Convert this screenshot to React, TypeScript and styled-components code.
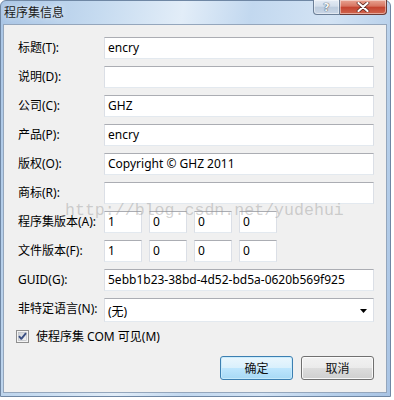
import React from "react";
import styled, { createGlobalStyle } from "styled-components";

const Global = createGlobalStyle`
  html, body { margin: 0; padding: 0; background: #ffffff; }
  body { font-family: "Noto Sans", "Noto Sans CJK SC", sans-serif; font-size: 12px; color: #000; }
  * { box-sizing: border-box; }
`;

const Window = styled.div`
  width: 391px;
  height: 397px;
  display: flex;
  flex-direction: column;
  border: 1px solid #6f87a4;
  border-radius: 6px 6px 0 0;
  padding: 0 3px 3px 2px;
  background: linear-gradient(
    100deg,
    #a9c5e5 0%,
    #c6dbf0 22%,
    #e2edf8 40%,
    #c2d8ef 55%,
    #d3e3f4 72%,
    #b6cfea 88%,
    #a9c4e4 100%
  );
`;

const TitleBar = styled.div`
  height: 23px;
  display: flex;
  justify-content: space-between;
  align-items: flex-start;
`;

const TitleText = styled.div`
  padding: 3px 0 0 1px;
  font-family: "Noto Sans CJK SC", sans-serif;
  font-size: 12px;
  line-height: 16px;
  color: #1b1b1b;
  text-shadow: 0 0 6px rgba(255, 255, 255, 0.9);
`;

const CaptionButtons = styled.div`
  display: flex;
  margin-top: -1px;
`;

const CaptionButton = styled.div<{ $kind: "help" | "close" }>`
  height: 15px;
  width: ${(p) => (p.$kind === "help" ? "27px" : "47px")};
  display: flex;
  align-items: center;
  justify-content: center;
  border: 1px solid ${(p) => (p.$kind === "help" ? "#6c7f97" : "#6b3b36")};
  border-top: none;
  border-radius: ${(p) => (p.$kind === "help" ? "0 0 0 4px" : "0 0 4px 0")};
  border-left: ${(p) => (p.$kind === "close" ? "none" : "")};
  box-shadow: inset 0 0 0 1px rgba(255, 255, 255, 0.45);
  background: ${(p) =>
    p.$kind === "help"
      ? "linear-gradient(#e4ebf4 0%, #d3deeb 45%, #bccbdd 50%, #c9d6e6 100%)"
      : "linear-gradient(#e8a493 0%, #d7735f 45%, #c4422e 50%, #d0664f 100%)"};
`;

const HelpGlyph = styled.span`
  font-family: "DejaVu Sans", sans-serif;
  font-weight: bold;
  font-size: 11px;
  line-height: 11px;
  color: #f4f6f9;
  text-shadow: 0 0 1px #3d4a5c, 0 0 1px #3d4a5c;
`;

const Client = styled.div`
  position: relative;
  flex: 1;
  background: #f0f0f0;
  border: 1px solid #94a6bc;
  display: flex;
  flex-direction: column;
  padding: 12px 12px 0 14px;
`;

const FormGrid = styled.div`
  display: grid;
  grid-template-columns: 86px 1fr;
  grid-auto-rows: 22px;
  row-gap: 7px;
  align-items: center;
`;

const Label = styled.div`
  font-size: 12px;
  line-height: 16px;
  color: #000;
  white-space: nowrap;
`;

const boxBorder = `
  border-top: 1px solid #abadb3;
  border-left: 1px solid #dbdfe6;
  border-right: 1px solid #dbdfe6;
  border-bottom: 1px solid #e3e9ef;
`;

const TextBox = styled.div<{ $w?: number }>`
  height: 22px;
  width: ${(p) => (p.$w ? `${p.$w}px` : "100%")};
  background: #ffffff;
  ${boxBorder}
  padding: 0 4px 0 3px;
  display: flex;
  align-items: center;
  font-size: 12px;
  line-height: 16px;
  white-space: nowrap;
  overflow: hidden;
`;

const VersionRow = styled.div`
  display: flex;
  gap: 7px;
`;

const Combo = styled.div`
  height: 24px;
  align-self: start;
  background: #ffffff;
  ${boxBorder}
  padding: 1px 6px 0 3px;
  display: flex;
  align-items: center;
  justify-content: space-between;
  font-size: 12px;
`;

const CheckRow = styled.div`
  display: flex;
  align-items: center;
  gap: 7px;
  margin: 9px 0 0 -2px;
  height: 14px;
  font-size: 12px;
`;

const ButtonRow = styled.div`
  display: flex;
  justify-content: flex-end;
  gap: 8px;
  margin-top: 13px;
`;

const PushButton = styled.div<{ $default?: boolean }>`
  width: 73px;
  height: 24px;
  display: flex;
  align-items: center;
  justify-content: center;
  border-radius: 3px;
  font-size: 12px;
  color: #111;
  border: 1px solid ${(p) => (p.$default ? "#3c7fb1" : "#707070")};
  box-shadow: inset 0 0 0 1px
    ${(p) => (p.$default ? "rgba(200, 235, 252, 0.9)" : "rgba(252, 252, 252, 0.9)")};
  background: ${(p) =>
    p.$default
      ? "linear-gradient(#eaf6fd 0%, #d9f0fc 49%, #bee6fd 50%, #a7d9f5 100%)"
      : "linear-gradient(#f2f2f2 0%, #ebebeb 49%, #dddddd 50%, #cfcfcf 100%)"};
`;

const Watermark = styled.div`
  position: absolute;
  left: 61px;
  top: 176px;
  font-family: "Liberation Mono", monospace;
  font-size: 16.6px;
  line-height: 20px;
  color: rgba(150, 150, 150, 0.42);
  white-space: nowrap;
  pointer-events: none;
`;

const CloseIcon = () => (
  <svg width="14" height="10" viewBox="0 0 14 10">
    <path
      d="M2.5 1 L11.5 9 M11.5 1 L2.5 9"
      stroke="#5a2620"
      strokeWidth="3.6"
      strokeLinecap="round"
    />
    <path
      d="M2.5 1 L11.5 9 M11.5 1 L2.5 9"
      stroke="#ffffff"
      strokeWidth="2.2"
      strokeLinecap="round"
    />
  </svg>
);

const DropArrow = () => (
  <svg width="7" height="4" viewBox="0 0 7 4">
    <path d="M0 0 H7 L3.5 4 Z" fill="#000" />
  </svg>
);

const CheckBoxIcon = () => (
  <svg width="13" height="13" viewBox="0 0 13 13">
    <defs>
      <linearGradient id="cbg" x1="0" y1="0" x2="1" y2="1">
        <stop offset="0" stopColor="#cbcfd5" />
        <stop offset="1" stopColor="#f6f6f6" />
      </linearGradient>
    </defs>
    <rect x="0.5" y="0.5" width="12" height="12" fill="#f4f4f4" stroke="#8f8f8f" />
    <rect x="2.5" y="2.5" width="8" height="8" fill="url(#cbg)" stroke="#b4b8bf" strokeWidth="0.6" />
    <path
      d="M3 6.2 L5.3 8.8 L10 3.2"
      stroke="#3a4f83"
      strokeWidth="1.9"
      fill="none"
      strokeLinejoin="round"
    />
  </svg>
);

const rows: [string, string][] = [
  ["标题(T):", "encry"],
  ["说明(D):", ""],
  ["公司(C):", "GHZ"],
  ["产品(P):", "encry"],
  ["版权(O):", "Copyright © GHZ 2011"],
  ["商标(R):", ""],
];

export default function App() {
  return (
    <>
      <Global />
      <Window>
        <TitleBar>
          <TitleText>程序集信息</TitleText>
          <CaptionButtons>
            <CaptionButton $kind="help">
              <HelpGlyph>?</HelpGlyph>
            </CaptionButton>
            <CaptionButton $kind="close">
              <CloseIcon />
            </CaptionButton>
          </CaptionButtons>
        </TitleBar>
        <Client>
          <FormGrid>
            {rows.map(([label, value]) => (
              <React.Fragment key={label}>
                <Label>{label}</Label>
                <TextBox>{value}</TextBox>
              </React.Fragment>
            ))}
            <Label>程序集版本(A):</Label>
            <VersionRow>
              {["1", "0", "0", "0"].map((v, i) => (
                <TextBox key={i} $w={38}>
                  {v}
                </TextBox>
              ))}
            </VersionRow>
            <Label>文件版本(F):</Label>
            <VersionRow>
              {["1", "0", "0", "0"].map((v, i) => (
                <TextBox key={i} $w={38}>
                  {v}
                </TextBox>
              ))}
            </VersionRow>
            <Label>GUID(G):</Label>
            <TextBox>5ebb1b23-38bd-4d52-bd5a-0620b569f925</TextBox>
            <Label>非特定语言(N):</Label>
            <Combo>
              <span>(无)</span>
              <DropArrow />
            </Combo>
          </FormGrid>
          <CheckRow>
            <CheckBoxIcon />
            <span>使程序集 COM 可见(M)</span>
          </CheckRow>
          <ButtonRow>
            <PushButton $default>确定</PushButton>
            <PushButton>取消</PushButton>
          </ButtonRow>
          <Watermark>http://blog.csdn.net/yudehui</Watermark>
        </Client>
      </Window>
    </>
  );
}
